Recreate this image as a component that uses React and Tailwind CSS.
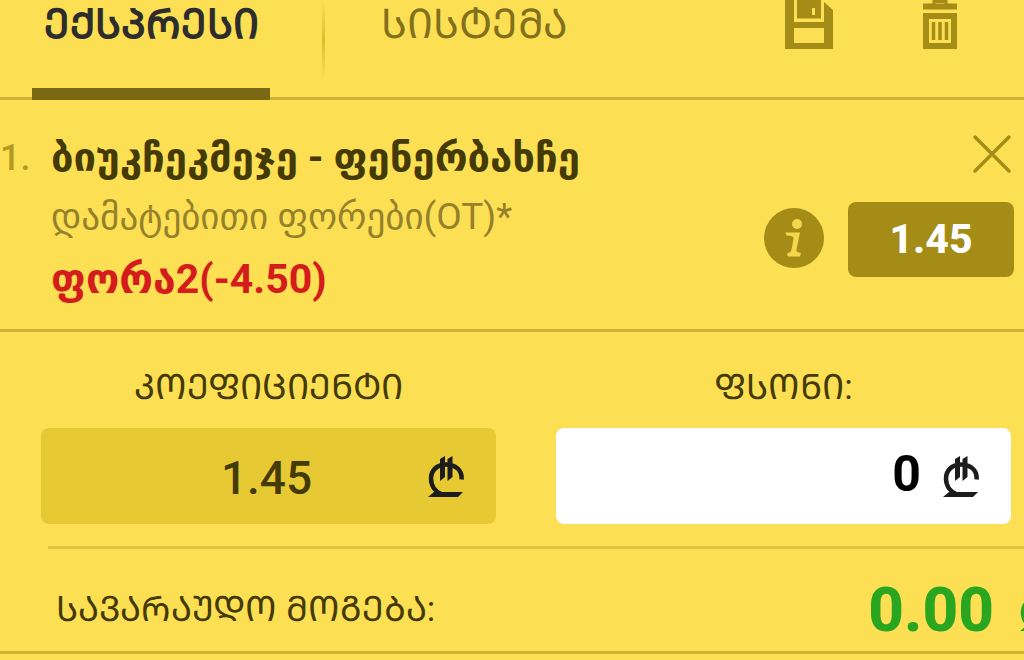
import React, { useState } from "react";

const SaveIcon = () => (
  <svg className="w-12 h-[49px]" viewBox="0 0 48 49" fill="#a48c17">
    <path
      fillRule="evenodd"
      d="M0 0h9v22h30V2l9 8v39H0V0zM9 28v15h30V28H9z"
    />
    <path fillRule="evenodd" d="M12 0h24v18.500H12V0zM27 8v7h3V8h-3z" />
  </svg>
);

const TrashIcon = () => (
  <svg className="w-[34px] h-[49px]" viewBox="0 0 34 49" fill="none" stroke="#a48c17">
    <path d="M11 5V1.500h12V5" strokeWidth="3" />
    <path d="M0 6.500h34" strokeWidth="6" />
    <path d="M3 16h28v30H3z" strokeWidth="6" />
    <path d="M10.500 22v18M17 22v18M23.500 22v18" strokeWidth="3.500" />
  </svg>
);

const CloseIcon = () => (
  <svg className="w-10 h-10" viewBox="0 0 40 40" fill="none" stroke="#a48c17" strokeWidth="3.500" strokeLinecap="round">
    <path d="M3 3l34 34M37 3L3 37" />
  </svg>
);

const InfoIcon = () => (
  <svg className="w-[60px] h-[60px]" viewBox="0 0 60 60">
    <circle cx="30" cy="30" r="30" fill="#a48c17" />
    <circle cx="33" cy="16" r="5" fill="#f3d64c" />
    <path
      d="M21.500 24.500H36l-3.500 17q-.5 3 4.500 3.500l-1 3.500H24l-1-3q4-1 4.500-4l2-11q.5-3-7-3z"
      fill="#f3d64c"
    />
  </svg>
);

const LariIcon = ({ className = "" }) => (
  <svg className={`h-[41px] w-9 shrink-0 ${className}`} viewBox="0 0 36 41" fill="currentColor">
    <path
      d="M33.500 23.500C34.500 14 27 8.500 18 8.500 9 8.500 3 14.500 3 22.500 3 30 7.500 36 14 38.500"
      fill="none"
      stroke="currentColor"
      strokeWidth="4.500"
    />
    <path d="M12 3l5-3v21l-5 4zM19.500 3l5-3v21l-5 4z" />
    <path d="M0 41l6-5h29l-5 5z" />
  </svg>
);

const App = () => {
  const [tab, setTab] = useState("express");
  const [stake, setStake] = useState("0");

  const tabClass = (name) =>
    tab === name ? "font-bold text-[#2d2d2d]" : "text-[#81701c]";

  return (
    <div className="min-h-screen overflow-hidden bg-[#fddf53] font-[Roboto,'DejaVu_Sans',sans-serif] text-[#443a06]">
      <header className="flex h-[100px] items-start border-b-3 border-[#cfb233] pl-8">
        <button
          onClick={() => setTab("express")}
          className={`h-[100px] w-[238px] shrink-0 border-b-12 border-[#7b6813] pb-10 text-[41px] leading-12 whitespace-nowrap ${tabClass("express")}`}
        >
          ᲔᲥᲡᲞᲠᲔᲡᲘ
        </button>
        <div className="ml-[52px] h-20 w-[3px] shrink-0 bg-linear-to-b from-[#fddf53] via-[#dfbf2d] to-[#fddf53]" />
        <button
          onClick={() => setTab("system")}
          className={`h-[88px] w-[298px] shrink-0 pb-10 text-[41px] leading-12 ${tabClass("system")}`}
        >
          ᲡᲘᲡᲢᲔᲛᲐ
        </button>
        <div className="ml-auto flex items-start gap-[90px] pr-[67px]">
          <button aria-label="Save">
            <SaveIcon />
          </button>
          <button aria-label="Delete">
            <TrashIcon />
          </button>
        </div>
      </header>

      <section className="flex h-[232px] border-b-3 border-[#cfb233] pr-[10px]">
        <span className="w-[51px] shrink-0 pt-9 text-[36px] leading-[44px] font-medium text-[#b39a22]">1.</span>
        <div className="min-w-0 grow pt-9 whitespace-nowrap">
          <h2 className="text-[40px] leading-[44px] font-bold">ბიუკჩეკმეჯე - ფენერბახჩე</h2>
          <p className="pt-3 text-[37px] leading-[50px] text-[#94812a]">დამატებითი ფორები(OT)*</p>
          <p className="pt-3 text-[41px] leading-[50px] font-bold text-[#d41c1c]">ფორა2(-4.50)</p>
        </div>
        <div className="flex flex-col items-end pt-[34px]">
          <button aria-label="Remove" className="pr-[2px]">
            <CloseIcon />
          </button>
          <div className="flex items-start gap-6 pt-7">
            <button aria-label="Info" className="pt-[6px]">
              <InfoIcon />
            </button>
            <button className="h-[75px] w-[166px] rounded-lg bg-[#a48c17] text-[41px] font-extrabold text-white">
              1.45
            </button>
          </div>
        </div>
      </section>

      <section className="grid grid-cols-2 gap-[60px] pt-8 pr-[13px] pb-[22px] pl-[41px]">
        <div>
          <h3 className="text-center text-[35px] leading-12">ᲙᲝᲔᲤᲘᲪᲘᲔᲜᲢᲘ</h3>
          <div className="mt-4 flex h-24 items-center rounded-lg bg-[#e7c934] pr-8">
            <span className="grow pt-1 pl-16 text-center text-[46px] font-medium">1.45</span>
            <LariIcon className="text-[#1c1c1c]" />
          </div>
        </div>
        <div>
          <label htmlFor="stake" className="block text-center text-[35px] leading-12">
            ᲤᲡᲝᲜᲘ:
          </label>
          <div className="mt-4 flex h-24 items-center rounded-lg bg-white pr-8">
            <input
              id="stake"
              value={stake}
              onChange={(e) => setStake(e.target.value)}
              className="min-w-0 grow pr-[22px] pb-1 text-right text-[50px] font-bold text-black outline-none"
            />
            <LariIcon className="text-[#1c1c1c]" />
          </div>
        </div>
      </section>

      <section className="border-b-3 border-[#cfb233]">
        <div className="ml-12 flex h-[105px] items-center justify-between border-t-3 border-[#e0c340] pt-5">
          <span className="pl-2 text-[35px] leading-12 whitespace-nowrap">ᲡᲐᲕᲐᲠᲐᲣᲓᲝ ᲛᲝᲒᲔᲑᲐ:</span>
          <span className="flex items-center whitespace-nowrap text-[#29a51f]">
            <span className="pr-[26px] text-[62px] leading-16 font-extrabold">0.00</span>
            <span className="w-1 overflow-hidden">
              <LariIcon />
            </span>
          </span>
        </div>
      </section>
    </div>
  );
};

export default App;
